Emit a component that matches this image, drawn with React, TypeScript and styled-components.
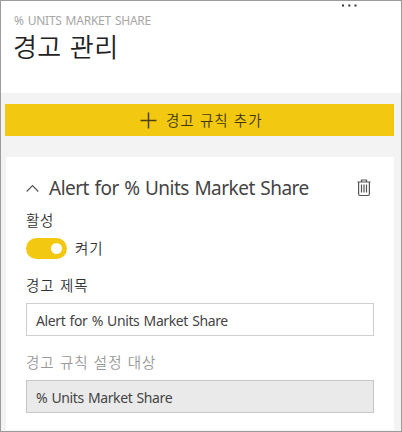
import React from "react";
import styled, { createGlobalStyle } from "styled-components";

const Global = createGlobalStyle`
  * { box-sizing: border-box; }
  body { margin: 0; background: #fff; font-family: "Noto Sans", "Noto Sans CJK KR", sans-serif; }
`;

const Panel = styled.main`
  width: 402px;
  height: 432px;
  border: 1px solid #9c9c9c;
  display: flex;
  flex-direction: column;
  overflow: hidden;
  background: #fff;
`;

const Header = styled.header`
  height: 92px;
  flex: none;
  display: flex;
  justify-content: space-between;
  padding: 0 43px 0 13px;
`;

const Heading = styled.div`
  display: flex;
  flex-direction: column;
  padding-top: 11px;
`;

const Text = styled.span<{ $size: number; $line: number; $spacing?: number; $color?: string }>`
  display: block;
  white-space: nowrap;
  font-size: ${(p) => p.$size}px;
  line-height: ${(p) => p.$line}px;
  letter-spacing: ${(p) => p.$spacing ?? 0}px;
  word-spacing: 1px;
  color: ${(p) => p.$color ?? "#444"};
`;

const Korean = styled(Text)`
  font-family: "Noto Sans CJK KR", sans-serif;
  font-weight: 350;
`;

const Title = styled(Korean)`
  margin: 0 0 0 -1px;
  word-spacing: 2px;
`;

const Body = styled.section`
  flex: 1;
  display: flex;
  flex-direction: column;
  gap: 21px;
  padding: 11px 7px 1px 4px;
  background: #f3f3f3;
`;

const AddButton = styled.button`
  height: 32px;
  flex: none;
  border: 0;
  padding: 0 0 0 135px;
  display: flex;
  align-items: center;
  gap: 9px;
  background: #f2c811;
`;

const Card = styled.article`
  flex: 1;
  margin-left: 1px;
  padding: 18px 23px 0 20px;
  background: #fff;
  display: flex;
  flex-direction: column;
`;

const CardHeader = styled.div`
  height: 26px;
  margin-bottom: 8px;
  display: flex;
  align-items: center;
`;

const CardTitle = styled.div`
  flex: 1;
  margin-left: 10px;
`;

const ToggleRow = styled.div`
  display: flex;
  align-items: center;
  gap: 8px;
  height: 22px;
  margin: 6px 0 16px;
`;

const Switch = styled.span`
  width: 41px;
  height: 21px;
  border-radius: 11px;
  padding-right: 5px;
  display: flex;
  align-items: center;
  justify-content: flex-end;
  background: #f2c811;
`;

const Knob = styled.span`
  width: 11px;
  height: 11px;
  border-radius: 50%;
  background: #fff;
`;

const Field = styled.div<{ $disabled?: boolean }>`
  height: 33px;
  width: 348px;
  margin-top: 8px;
  border: 1px solid ${(p) => (p.$disabled ? "#c6c6c6" : "#cfcfcf")};
  background: ${(p) => (p.$disabled ? "#eaeaea" : "#fff")};
  display: flex;
  align-items: center;
  padding: 2px 0 0 9px;
`;

const Target = styled.div`
  margin-top: 16px;
`;

const More = () => (
  <svg width="16" height="10" fill="#333">
    <rect x="0" y="3.5" width="2" height="2" />
    <rect x="6.3" y="3.5" width="2" height="2" />
    <rect x="12.5" y="3.5" width="2" height="2" />
  </svg>
);

const Plus = () => (
  <svg width="17" height="17" stroke="#4d410e" strokeWidth="1.5">
    <path d="M8.5 .5v16M.5 8.5h16" />
  </svg>
);

const Chevron = () => (
  <svg width="13" height="9" fill="none" stroke="#555" strokeWidth="1.2">
    <path d="M.7 7.5 6.5 1.7l5.8 5.8" />
  </svg>
);

const Trash = () => (
  <svg width="14" height="18" fill="none" stroke="#555" strokeWidth="1.2">
    <path d="M.5 3h13M4.5 3V1h5v2M1.6 3v12q0 1.5 1.4 1.5h8q1.4 0 1.4-1.5V3M4.5 5.5v8M7 5.5v8M9.5 5.5v8" />
  </svg>
);

export default function App() {
  return (
    <>
      <Global />
      <Panel>
        <Header>
          <Heading>
            <Text $size={12} $line={18} $spacing={-0.23} $color="#a6a6a6">% UNITS MARKET SHARE</Text>
            <Title as="h1" $size={26} $line={31} $spacing={0.4} $color="#222">경고 관리</Title>
          </Heading>
          <More />
        </Header>
        <Body>
          <AddButton>
            <Plus />
            <Korean $size={14.5} $line={22} $spacing={1} $color="#40370f">경고 규칙 추가</Korean>
          </AddButton>
          <Card>
            <CardHeader>
              <Chevron />
              <CardTitle>
                <Text $size={19} $line={26} $spacing={-0.5}>Alert for % Units Market Share</Text>
              </CardTitle>
              <Trash />
            </CardHeader>
            <Korean $size={14.5} $line={22} $spacing={0.6} $color="#333">활성</Korean>
            <ToggleRow>
              <Switch role="switch" aria-checked="true"><Knob /></Switch>
              <Korean $size={14.5} $line={22} $spacing={1} $color="#333">켜기</Korean>
            </ToggleRow>
            <Korean $size={14.5} $line={20} $spacing={1} $color="#333">경고 제목</Korean>
            <Field>
              <Text $size={14} $line={20} $spacing={-0.4}>Alert for % Units Market Share</Text>
            </Field>
            <Target>
              <Korean $size={14.5} $line={20} $spacing={1} $color="#999">경고 규칙 설정 대상</Korean>
              <Field $disabled>
                <Text $size={14} $line={20} $spacing={-0.4}>% Units Market Share</Text>
              </Field>
            </Target>
          </Card>
        </Body>
      </Panel>
    </>
  );
}
